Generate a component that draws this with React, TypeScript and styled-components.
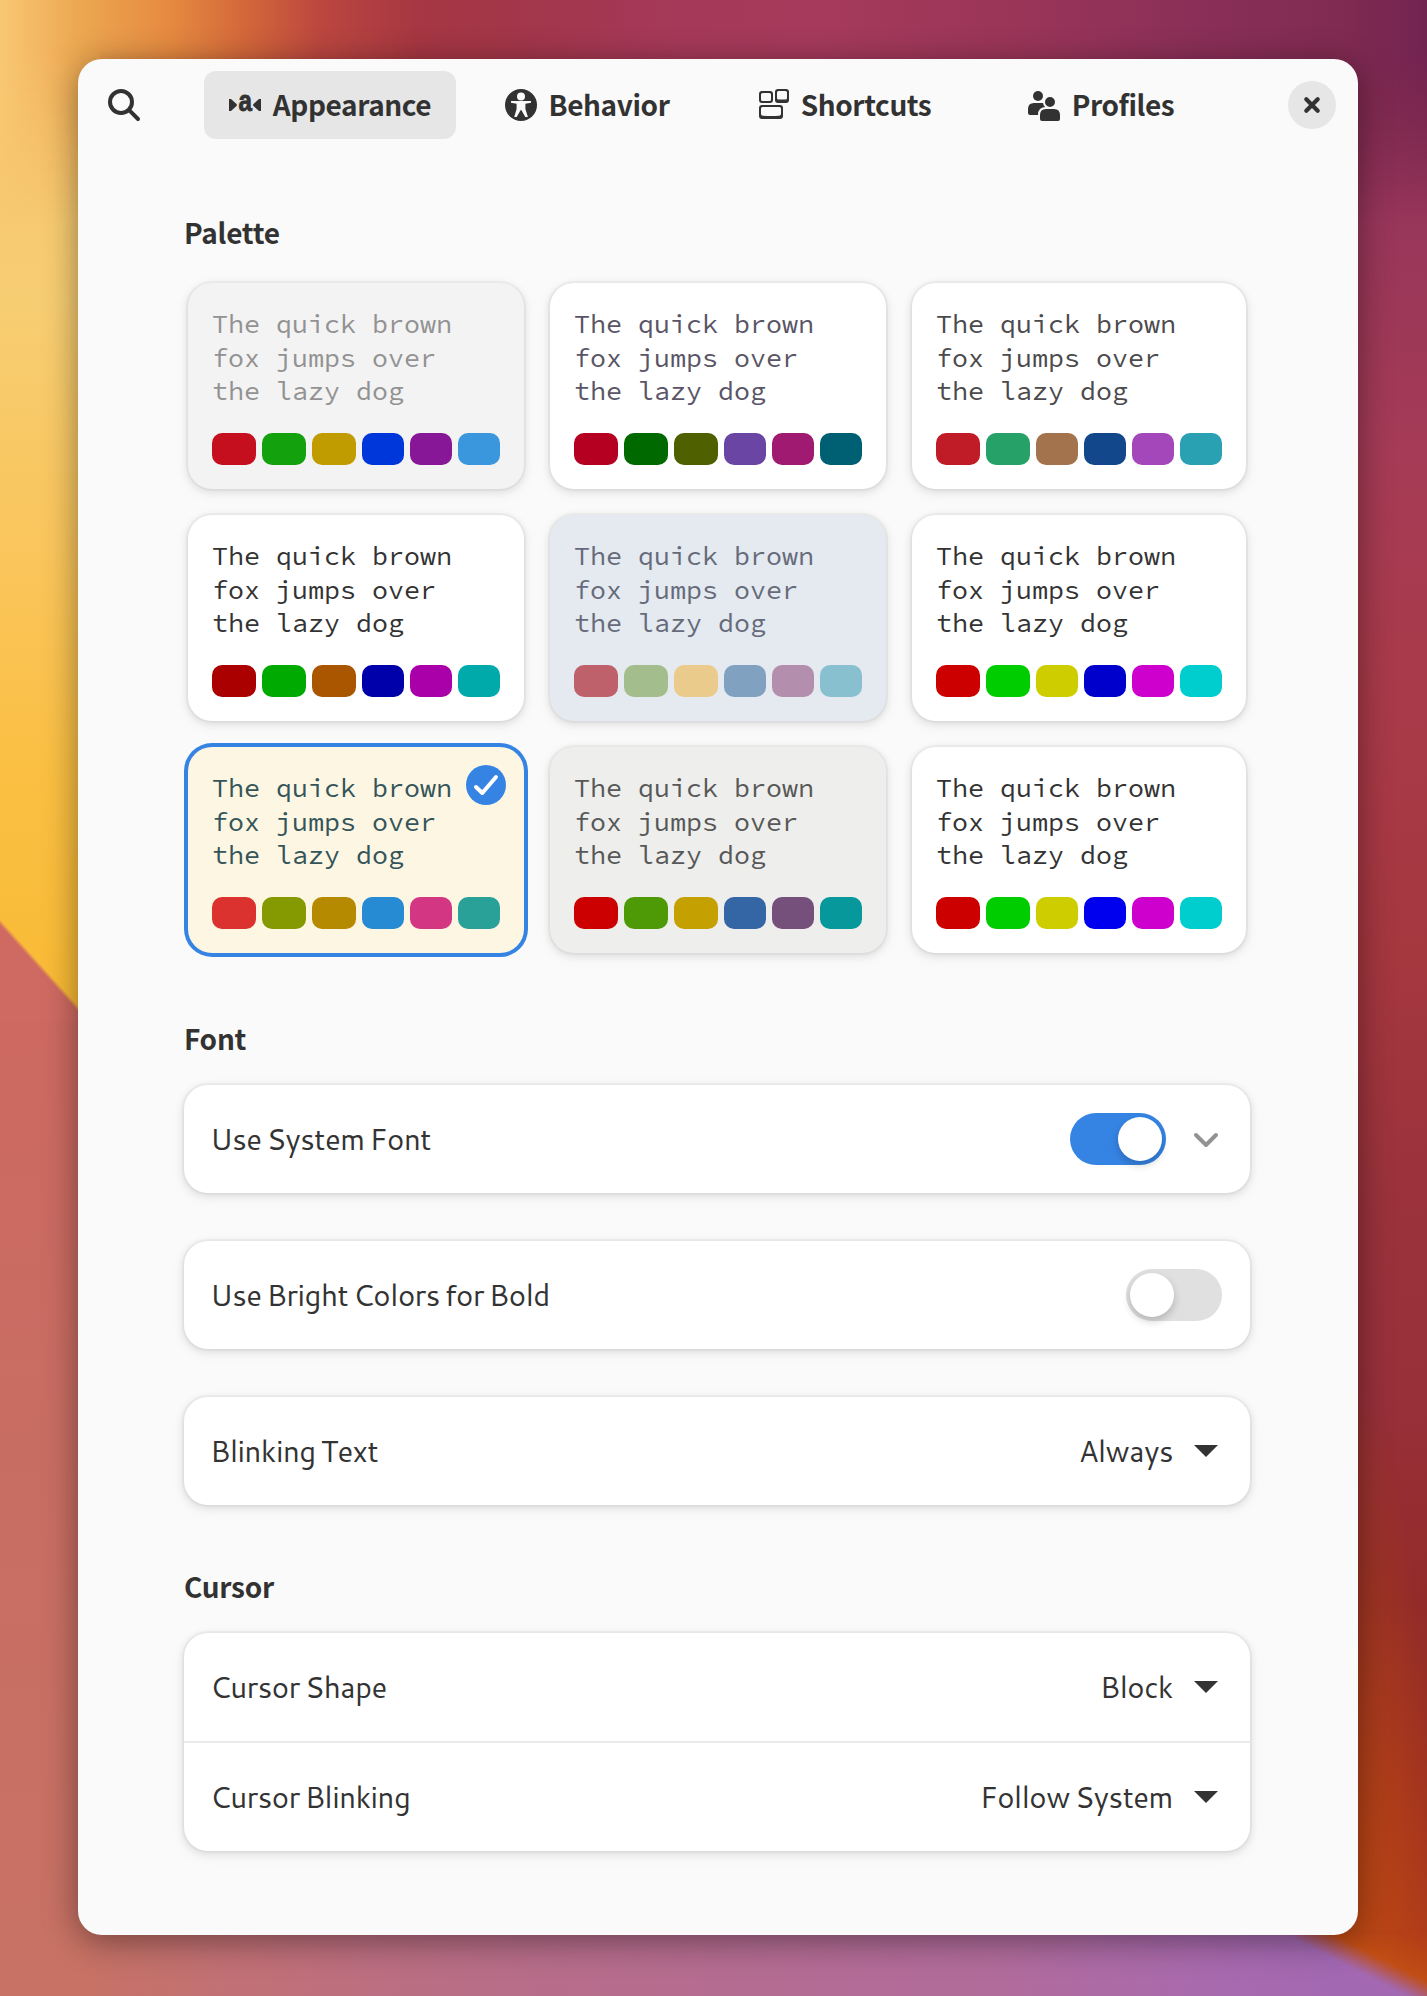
import React from "react";
import styled, { createGlobalStyle, css } from "styled-components";

const UI = `Cantarell, "Noto Sans", "Open Sans", sans-serif`;
const UI_BOLD = `"Noto Sans CJK SC", "Noto Sans", sans-serif`;
const MONO = `"Source Code Pro", "Noto Sans Mono", "DejaVu Sans Mono", monospace`;
const ACCENT = "#3584e4";

const GlobalStyle = createGlobalStyle`
  * { box-sizing: border-box; }
  body { margin: 0; }
`;

const Desktop = styled.div`
  position: relative;
  width: 1427px;
  height: 1996px;
  padding: 59px 69px 61px 78px;
  overflow: hidden;
  font-family: ${UI};
  color: #333;
  background:
    linear-gradient(228deg, transparent 79px, #cf6a62 83px) 0 912px / 100px 110px no-repeat,
    linear-gradient(#cd6961, #c96d63 400px, #c77264 974px) 0 1022px / 100px 974px no-repeat,
    linear-gradient(#f7c36c, #f7cd72 300px, #fac55b 560px, #fabf42 780px, #f9ba34 1020px) 0 0 / 100px 1020px no-repeat,
    radial-gradient(87px 620px at 0 100%, rgba(205, 85, 15, 0.65), transparent) 1350px 1376px / 77px 620px no-repeat,
    linear-gradient(#6f2450, #8a2d50 90px, #98365a 220px, #a53b56 450px, #a93a49 700px, #a5373f 950px, #9a323b 1220px, #98303a 1400px, #922b29 1600px, #a0321f 1780px, #b23c18 1996px) 1340px 0 / 87px 1996px no-repeat,
    #a03a50;

  &::before,
  &::after {
    content: "";
    position: absolute;
    left: 0;
    width: 100%;
  }

  &::before {
    top: 0;
    height: 220px;
    background: linear-gradient(90deg, #f9c774, #eca750 80px, #e58a40 170px, #d2653a 250px, #bb473f 320px, #a63642 420px, #a2364a 520px, #a5395a 680px, #a53a5c 820px, #9a3558 1020px, #8a2f58 1200px, #802b52 1340px, #722450);
    mask-image: linear-gradient(#000 50px, transparent);
  }

  &::after {
    bottom: 0;
    height: 66px;
    background:
      linear-gradient(26.7deg, transparent 72px, #c04d14 94px, #b03a18 140px) right bottom / 180px 66px no-repeat,
      linear-gradient(90deg, #c77264 80px, #c17076 240px, #b96e85 440px, #b56c90 700px, #b16c9c 1000px, #aa6aac 1180px, #a268b2 1330px);
  }
`;

const Window = styled.main`
  position: relative;
  z-index: 1;
  height: 1876px;
  border-radius: 24px;
  background: #fafafa;
  box-shadow: 0 6px 34px rgba(0, 0, 0, 0.42);
`;

const HeaderBar = styled.header`
  display: flex;
  align-items: center;
  height: 92px;
  padding: 0 22px 0 30px;
  color: #323232;
`;

const Tabs = styled.nav`
  display: flex;
  gap: 5px;
  margin-left: 64px;
`;

const Tab = styled.div<{ $active?: boolean }>`
  display: flex;
  align-items: center;
  justify-content: center;
  gap: 12px;
  width: 252px;
  height: 68px;
  border-radius: 12px;
  background: ${(p) => (p.$active ? "#e6e6e6" : "transparent")};
`;

const boldText = css`
  font-family: ${UI_BOLD};
  font-size: 28px;
  font-weight: 700;
  letter-spacing: -0.25px;
  color: #323232;
`;

const TabLabel = styled.span`
  ${boldText}
  padding-bottom: 2px;
  letter-spacing: -0.4px;
  white-space: nowrap;
`;

const CloseButton = styled.button`
  display: grid;
  place-items: center;
  width: 48px;
  height: 48px;
  margin-left: auto;
  padding: 0;
  border: 0;
  border-radius: 50%;
  color: #323232;
  background: #e6e6e6;
`;

const Icon = styled.svg<{ $size?: number }>`
  display: block;
  flex: none;
  width: ${(p) => p.$size ?? 32}px;
  height: ${(p) => p.$size ?? 32}px;
  overflow: visible;
`;

const Content = styled.div`
  width: 1066px;
  margin-left: 106px;
  padding-top: 64px;
`;

const Heading = styled.h2<{ $before?: number; $after?: number }>`
  ${boldText}
  margin: ${(p) => p.$before ?? 0}px 0 ${(p) => p.$after ?? 24}px;
  height: 40px;
  line-height: 34px;
`;

const surface = css`
  box-shadow: 0 0 0 2px rgba(0, 0, 0, 0.03), 0 2px 6px 2px rgba(0, 0, 0, 0.07),
    0 4px 12px 4px rgba(0, 0, 0, 0.03);
`;

const PaletteGrid = styled.div`
  display: grid;
  grid-template-columns: 336px 336px 334px;
  gap: 26px;
  padding-left: 4px;
`;

const Card = styled.div<{ $bg: string; $fg: string; $selected?: boolean }>`
  position: relative;
  height: 206px;
  padding: 24px;
  border-radius: 24px;
  color: ${(p) => p.$fg};
  background: ${(p) => p.$bg};
  ${(p) => (p.$selected ? `box-shadow: 0 0 0 4px ${ACCENT};` : surface)}
`;

const Sample = styled.p`
  height: 102px;
  margin: 0 0 24px;
  font-family: ${MONO};
  font-size: 26.67px;
  line-height: 33.7px;
  white-space: pre;
`;

const Swatches = styled.div`
  display: flex;
  gap: 6px;
`;

const Swatch = styled.i<{ $color: string; $width: number }>`
  width: ${(p) => p.$width}px;
  height: 32px;
  border-radius: 10px;
  background: ${(p) => p.$color};
`;

const CheckBadge = styled.span`
  position: absolute;
  top: 18px;
  right: 18px;
  border-radius: 50%;
  background: ${ACCENT};
`;

const List = styled.section`
  border-radius: 24px;
  background: #fff;
  ${surface}

  & + & {
    margin-top: 48px;
  }
`;

const Row = styled.div`
  display: flex;
  align-items: center;
  height: 108px;
  padding: 0 28px 0 26px;
  font-size: 29.33px;
  letter-spacing: -0.45px;
  word-spacing: -2.7px;

  & + & {
    height: 110px;
    border-top: 2px solid #ebebeb;
  }
`;

const Label = styled.span`
  flex: 1;
  padding-bottom: 2px;
`;

const Value = styled.span`
  margin-right: 17px;
  padding-bottom: 2px;
`;

const Switch = styled.span<{ $on?: boolean }>`
  display: flex;
  justify-content: ${(p) => (p.$on ? "flex-end" : "flex-start")};
  width: 96px;
  height: 52px;
  padding: 4px;
  border-radius: 26px;
  background: ${(p) => (p.$on ? ACCENT : "#e0e0e0")};

  &::after {
    content: "";
    width: 44px;
    height: 44px;
    border-radius: 50%;
    background: #fff;
    box-shadow: 0 4px 8px rgba(0, 0, 0, 0.2);
  }

  & + svg {
    margin-left: 24px;
  }
`;

const SearchIcon = () => (
  <Icon viewBox="0 0 16 16" fill="none" stroke="currentColor" strokeWidth="2" strokeLinecap="round">
    <circle cx="6.5" cy="6.5" r="5.5" />
    <path d="M10.7 10.7 15 15" />
  </Icon>
);

const AppearanceIcon = () => (
  <Icon viewBox="0 0 32 32" fill="currentColor">
    <path d="M0 10H2L7.5 15Q8.5 16 7.5 17L2 22H0Z" />
    <path d="M32 10H30L24.5 15Q23.5 16 24.5 17L30 22H32Z" />
    <text
      x="9.5"
      y="22"
      fontFamily="Liberation Sans, sans-serif"
      fontWeight="700"
      fontSize="29"
      textLength="13.5"
      lengthAdjust="spacingAndGlyphs"
      stroke="currentColor"
      strokeWidth="0.8"
    >
      a
    </text>
  </Icon>
);

const BehaviorIcon = () => (
  <Icon viewBox="0 0 32 32">
    <circle cx="16" cy="16" r="16" fill="currentColor" />
    <g fill="#fafafa">
      <circle cx="16" cy="7.6" r="4" />
      <path d="M6 12h20v1.8l-5.6 1v5.2l2.5 8h-2.6l-4-7h-.6l-4 7H9.2l2.4-8v-5.2L6 13.8z" />
    </g>
  </Icon>
);

const ShortcutsIcon = () => (
  <Icon viewBox="0 0 32 32" fill="currentColor" fillRule="evenodd">
    <path d="M5 2h8a3 3 0 0 1 3 3v6a3 3 0 0 1-3 3H5a3 3 0 0 1-3-3V5a3 3 0 0 1 3-3zM5.500 4A1.500 1.500 0 0 0 4 5.500v5A1.500 1.500 0 0 0 5.500 12h7a1.500 1.500 0 0 0 1.500-1.500v-5A1.500 1.500 0 0 0 12.500 4z" />
    <path d="M21 0h8a3 3 0 0 1 3 3v8a3 3 0 0 1-3 3h-8a3 3 0 0 1-3-3V3a3 3 0 0 1 3-3zM21.500 2A1.500 1.500 0 0 0 20 3.500v5.500A1.500 1.500 0 0 0 21.500 10.500h7A1.500 1.500 0 0 0 30 9V3.500A1.500 1.500 0 0 0 28.500 2z" />
    <path d="M5 16h18a3 3 0 0 1 3 3v8a3 3 0 0 1-3 3H5a3 3 0 0 1-3-3v-8a3 3 0 0 1 3-3zM5.500 18A1.500 1.500 0 0 0 4 19.500V25q0 1.500 2 1.700 8 .8 16 0 2-.2 2-1.700v-5.500a1.500 1.500 0 0 0-1.500-1.500z" />
  </Icon>
);

const ProfilesIcon = () => (
  <Icon viewBox="0 0 32 32" fill="currentColor">
    <circle cx="10" cy="7" r="5" />
    <path d="M6 14H14Q17.500 14 17.500 18V26H2A2 2 0 0 1 0 24V20Q0 14 6 14Z" />
    <circle cx="22" cy="13" r="6" stroke="#fafafa" strokeWidth="2" />
    <path d="M18 19h8q7 0 7 7v4q0 3-3 3H14q-3 0-3-3v-4q0-7 7-7z" stroke="#fafafa" strokeWidth="2" />
  </Icon>
);

const CloseIcon = () => (
  <Icon $size={16} viewBox="0 0 16 16" fill="none" stroke="currentColor" strokeWidth="4.2" strokeLinecap="round">
    <path d="M2.300 2.300l11.400 11.400M13.700 2.300 2.300 13.700" />
  </Icon>
);

const CheckIcon = () => (
  <Icon $size={40} viewBox="0 0 40 40" fill="none" stroke="#fff" strokeWidth="4" strokeLinecap="round" strokeLinejoin="round">
    <path d="M10 22l6.300 6L30 12" />
  </Icon>
);

const ChevronIcon = () => (
  <Icon viewBox="0 0 32 32" fill="none" stroke="#929292" strokeWidth="4" strokeLinecap="round" strokeLinejoin="round">
    <path d="M6 12l10 10 10-10" />
  </Icon>
);

const ArrowIcon = () => (
  <Icon viewBox="0 0 32 32" fill="#333">
    <path d="M4 10h24L16 22z" />
  </Icon>
);

const tabs = [
  { label: "Appearance", icon: AppearanceIcon },
  { label: "Behavior", icon: BehaviorIcon },
  { label: "Shortcuts", icon: ShortcutsIcon },
  { label: "Profiles", icon: ProfilesIcon },
];

const palettes = [
  { bg: "#f3f3f3", fg: "#929292", colors: ["#c50f1f", "#13a10e", "#c19c00", "#0037da", "#881798", "#3a96dd"] },
  { bg: "#ffffff", fg: "#595566", colors: ["#b50021", "#006a00", "#4f6000", "#6a45a3", "#a01a72", "#006073"] },
  { bg: "#ffffff", fg: "#4b4a4c", colors: ["#c01c28", "#26a269", "#a2734c", "#12488b", "#a347ba", "#2aa1b3"] },
  { bg: "#ffffff", fg: "#333333", colors: ["#aa0000", "#00aa00", "#aa5500", "#0000aa", "#aa00aa", "#00aaaa"] },
  { bg: "#e5e9f0", fg: "#656b7a", colors: ["#bf616a", "#a3be8c", "#ebcb8b", "#81a1c1", "#b48ead", "#88c0d0"] },
  { bg: "#ffffff", fg: "#333333", colors: ["#cd0000", "#00cd00", "#cdcd00", "#0000cd", "#cd00cd", "#00cdcd"] },
  { bg: "#fdf6e3", fg: "#335559", colors: ["#dc322f", "#859900", "#b58900", "#268bd2", "#d33682", "#2aa198"], selected: true },
  { bg: "#eeeeec", fg: "#575858", colors: ["#cc0000", "#4e9a06", "#c4a000", "#3465a4", "#75507b", "#06989a"] },
  { bg: "#ffffff", fg: "#333333", colors: ["#cd0000", "#00cd00", "#cdcd00", "#0000ee", "#cd00cd", "#00cdcd"] },
];

export default function App() {
  return (
    <Desktop>
      <GlobalStyle />
      <Window>
        <HeaderBar>
          <SearchIcon />
          <Tabs>
            {tabs.map(({ label, icon: TabIcon }, i) => (
              <Tab key={label} $active={i === 0}>
                <TabIcon />
                <TabLabel>{label}</TabLabel>
              </Tab>
            ))}
          </Tabs>
          <CloseButton aria-label="Close">
            <CloseIcon />
          </CloseButton>
        </HeaderBar>
        <Content>
          <Heading $after={28}>Palette</Heading>
          <PaletteGrid>
            {palettes.map((p, i) => (
              <Card key={i} $bg={p.bg} $fg={p.fg} $selected={p.selected}>
                <Sample>{"The quick brown\nfox jumps over\nthe lazy dog"}</Sample>
                <Swatches>
                  {p.colors.map((c, n) => (
                    <Swatch key={n} $color={c} $width={n < (i % 3 === 2 ? 2 : 3) ? 44 : 42} />
                  ))}
                </Swatches>
                {p.selected && (
                  <CheckBadge>
                    <CheckIcon />
                  </CheckBadge>
                )}
              </Card>
            ))}
          </PaletteGrid>
          <Heading $before={68}>Font</Heading>
          <List>
            <Row>
              <Label>Use System Font</Label>
              <Switch $on />
              <ChevronIcon />
            </Row>
          </List>
          <List>
            <Row>
              <Label>Use Bright Colors for Bold</Label>
              <Switch />
            </Row>
          </List>
          <List>
            <Row>
              <Label>Blinking Text</Label>
              <Value>Always</Value>
              <ArrowIcon />
            </Row>
          </List>
          <Heading $before={64}>Cursor</Heading>
          <List>
            <Row>
              <Label>Cursor Shape</Label>
              <Value>Block</Value>
              <ArrowIcon />
            </Row>
            <Row>
              <Label>Cursor Blinking</Label>
              <Value>Follow System</Value>
              <ArrowIcon />
            </Row>
          </List>
        </Content>
      </Window>
    </Desktop>
  );
}
